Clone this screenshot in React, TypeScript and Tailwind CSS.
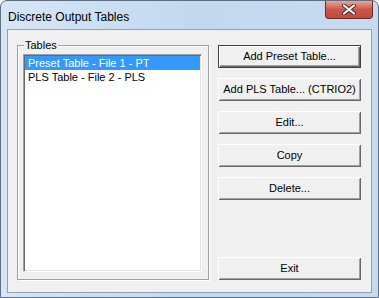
import React from "react";

const font = { fontFamily: '"Liberation Sans", Arial, sans-serif' };

function Button(props: { label: string; primary?: boolean; className?: string }) {
    return (
        <div
            className={
                "h-[23px] w-[143px] flex items-center justify-center whitespace-nowrap text-[11px] text-black bg-[#f0f0f0] " +
                (props.primary
                    ? "border border-[#404040] shadow-[inset_1px_1px_0_#fff,inset_-1px_-1px_0_#696969,inset_-2px_-2px_0_#a0a0a0] "
                    : "shadow-[inset_1px_1px_0_#fff,inset_-1px_-1px_0_#696969,inset_2px_2px_0_#f0f0f0,inset_-2px_-2px_0_#a0a0a0] ") +
                (props.className ?? "")
            }
        >
            {props.label}
        </div>
    );
}

export default function App() {
    let items = ["Preset Table - File 1 - PT", "PLS Table - File 2 - PLS"];
    return (
        <div className="w-[379px] h-[298px] bg-white" style={font}>
            <div className="w-[379px] h-[298px] rounded-t-[7px] border border-[#5d6e80] bg-gradient-to-r from-[#d6e6f6] via-[#c2d9f0] to-[#c6dbf2] flex flex-col">
                {/* title bar */}
                <div className="h-[28px] flex items-start relative">
                    <div className="pl-[7px] pt-[7px] text-[12px] text-black">Discrete Output Tables</div>
                    <div className="absolute right-[5px] top-0 w-[48px] h-[18px] rounded-b-[4px] border border-t-0 border-[#6e2a22] bg-gradient-to-b from-[#e8a597] via-[#c9584a] to-[#c54a37] flex items-center justify-center">
                        <svg width="14" height="11" viewBox="0 0 14 11">
                            <path d="M2 1.5 L12 9.5 M12 1.5 L2 9.5" stroke="#3a2b2b" strokeWidth="4" strokeLinecap="round" />
                            <path d="M2 1.5 L12 9.5 M12 1.5 L2 9.5" stroke="#ffffff" strokeWidth="2.2" strokeLinecap="round" />
                        </svg>
                    </div>
                </div>
                {/* client area */}
                <div className="mx-[6px] h-[264px] border border-[#8ea3b9] bg-[#f0f0f0] flex">
                    <div className="ml-[9px] mt-[15px] w-[192px] h-[235px] relative border border-[#a0a0a0] shadow-[inset_1px_1px_0_#fff,1px_1px_0_#fff] pl-[5px] pt-[8px]">
                        <span className="absolute left-[6px] top-[-8px] px-[1px] bg-[#f0f0f0] text-[11px] leading-[14px] text-black">
                            Tables
                        </span>
                        <div className="w-[179px] h-[218px] bg-white border border-t-[#a0a0a0] border-l-[#a0a0a0] border-r-white border-b-white shadow-[inset_1px_1px_0_#696969,inset_-1px_-1px_0_#e3e3e3] p-[1px]">
                            {items.map((a, i) => (
                                <div
                                    key={i}
                                    className={
                                        "h-[14px] pl-[3px] text-[11px] leading-[14px] whitespace-nowrap " +
                                        (i === 0 ? "bg-[#3399ff] text-white" : "text-black")
                                    }
                                >
                                    {a}
                                </div>
                            ))}
                        </div>
                    </div>
                    <div className="ml-[9px] mt-[15px] flex flex-col gap-[10px]">
                        <Button label="Add Preset Table..." primary />
                        <Button label="Add PLS Table... (CTRIO2)" />
                        <Button label="Edit..." />
                        <Button label="Copy" />
                        <Button label="Delete..." />
                        <Button label="Exit" className="mt-[47px]" />
                    </div>
                </div>
            </div>
        </div>
    );
}
